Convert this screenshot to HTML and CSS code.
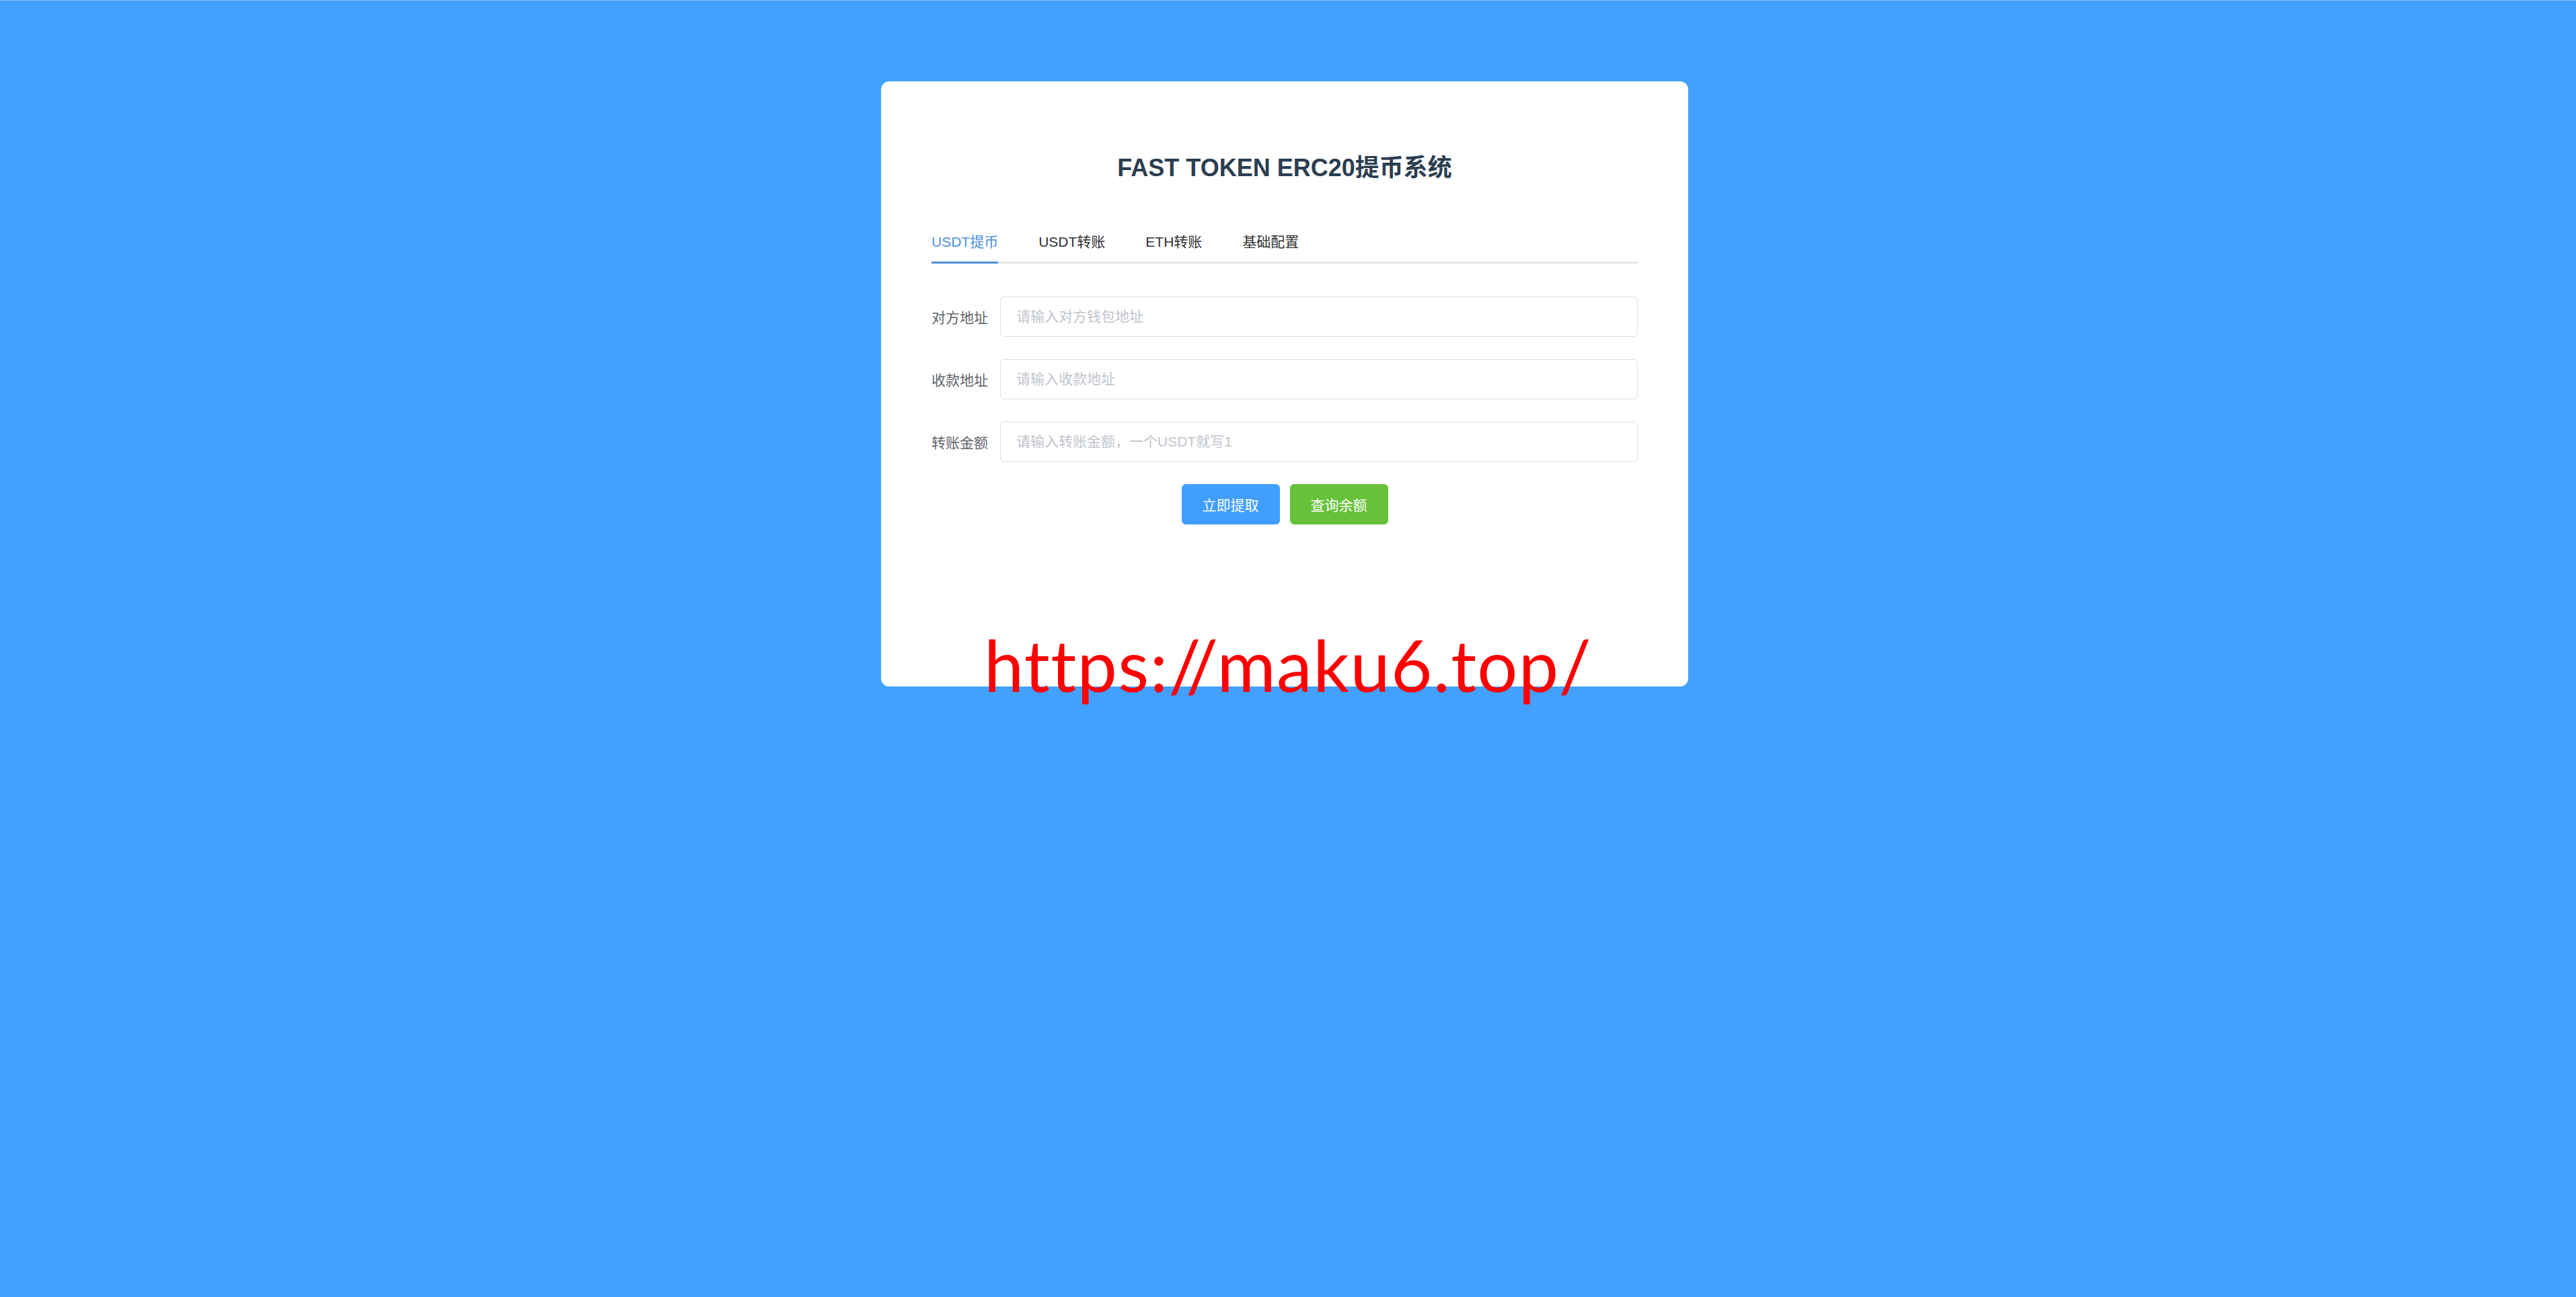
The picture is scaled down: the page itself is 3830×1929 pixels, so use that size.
FILE: index.html
```html
<!DOCTYPE html>
<html lang="zh-CN">
<head>
<meta charset="utf-8">
<title>FAST TOKEN ERC20提币系统</title>
<link rel="stylesheet" href="styles.css">
</head>
<body>
<div class="page">
  <div class="card">
    <h1 class="title">FAST TOKEN ERC20提币系统</h1>
    <div class="tabs">
      <div class="tab active">USDT提币</div>
      <div class="tab">USDT转账</div>
      <div class="tab">ETH转账</div>
      <div class="tab">基础配置</div>
    </div>
    <form class="form">
      <div class="row">
        <label class="label">对方地址</label>
        <input class="input" type="text" placeholder="请输入对方钱包地址">
      </div>
      <div class="row">
        <label class="label">收款地址</label>
        <input class="input" type="text" placeholder="请输入收款地址">
      </div>
      <div class="row">
        <label class="label">转账金额</label>
        <input class="input" type="text" placeholder="请输入转账金额，一个USDT就写1">
      </div>
      <div class="actions">
        <button type="button" class="btn btn-primary">立即提取</button>
        <button type="button" class="btn btn-success">查询余额</button>
      </div>
    </form>
  </div>
  <div class="watermark">https://maku6.top/</div>
</div>
</body>
</html>
```

FILE: styles.css
```css
html, body {
  margin: 0;
  padding: 0;
  background: #42a0fe;
  font-family: "Liberation Sans", Arial, "Noto Sans CJK SC", sans-serif;
}

.page {
  position: relative;
  min-height: 1928px;
  border-top: 1px solid #86c2ff;
  padding: 120px 10px 0 0;
  box-sizing: border-box;
}

.card {
  width: 1200px;
  height: 900px;
  margin: 0 auto;
  background: #ffffff;
  border-radius: 12px;
  padding: 108px 75px 0;
  box-sizing: border-box;
}

.title {
  margin: 0;
  font-size: 36px;
  line-height: 42px;
  font-weight: bold;
  color: #2c3e50;
  text-align: center;
}

.tabs {
  display: flex;
  margin-top: 58px;
  border-bottom: 3px solid #e4e7ed;
  height: 60px;
}

.tab {
  position: relative;
  padding: 0 30px;
  font-size: 21px;
  line-height: 62px;
  height: 60px;
  color: #303133;
}

.tab:first-child {
  padding-left: 0;
}

.tab.active {
  color: #4a90d9;
}

.tab.active::after {
  content: "";
  position: absolute;
  left: 0;
  right: 30px;
  bottom: -3px;
  height: 3px;
  background: #4a90d9;
}

.form {
  margin-top: 49px;
}

.row {
  display: flex;
  align-items: center;
  margin-bottom: 33px;
}

.label {
  width: 102px;
  padding-right: 18px;
  box-sizing: border-box;
  font-size: 21px;
  color: #606266;
  white-space: nowrap;
}

.input {
  flex: 1;
  height: 60px;
  box-sizing: border-box;
  border: 1px solid #d9dce3;
  border-radius: 6px;
  padding: 0 23px;
  font-size: 21px;
  font-family: inherit;
  color: #606266;
  outline: none;
  background: #fff;
}

.input::placeholder {
  color: #c0c4cc;
}

.actions {
  display: flex;
  justify-content: center;
  gap: 15px;
}

.btn {
  height: 60px;
  padding: 0 30px;
  border: 1px solid transparent;
  border-radius: 6px;
  font-size: 21px;
  font-family: inherit;
  color: #ffffff;
  cursor: pointer;
}

.btn-primary {
  background: #409eff;
  border-color: #409eff;
}

.btn-success {
  background: #67c23a;
  border-color: #67c23a;
}

.watermark {
  position: absolute;
  left: 0;
  right: 0;
  top: 934px;
  text-align: center;
  font-family: Lato, "Open Sans", sans-serif;
  font-size: 106px;
  line-height: 1;
  letter-spacing: 1.4px;
  color: #ff0000;
  pointer-events: none;
}
```
